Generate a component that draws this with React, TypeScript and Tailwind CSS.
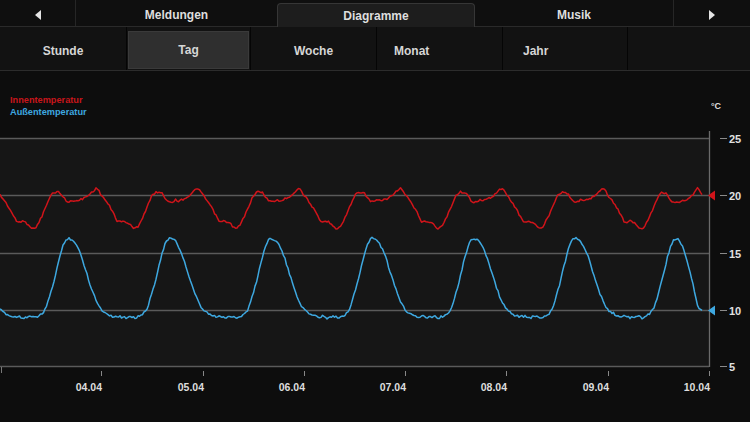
const PERIOD = 101.3;

const RED: [number, number][] = [
  [0, 195], [4, 200], [8, 206], [12, 213], [16, 221], [19, 222], [23, 221], [28, 224],
  [33, 229], [37, 226], [42, 216], [47, 204], [51, 195], [55, 192], [59, 192], [62, 195],
  [66, 201], [70, 202], [74, 200], [78, 201], [82, 199], [86, 197], [90, 194], [94, 190],
  [97, 188], [101.3, 195],
];

const RED_LAST: [number, number][] = [
  [0, 195], [4, 200], [8, 206], [12, 213], [16, 221], [19, 222], [23, 221], [28, 224],
  [33, 229], [37, 226], [42, 216], [47, 204], [51, 195], [55, 192], [59, 194], [62, 200],
  [66, 202], [70, 203], [74, 201], [78, 201], [82, 198], [86, 194], [90, 188], [92, 190],
  [95, 195], [101.3, 195],
];

const BLUE: [number, number][] = [
  [0, 310], [5, 313], [10, 316], [14, 317], [18, 316], [22, 318], [26, 317], [30, 316],
  [34, 318], [38, 316], [42, 314], [45, 310], [48, 302], [51, 292], [54, 281], [57, 268],
  [60, 256], [63, 246], [66, 240], [68, 238], [71, 239], [74, 241], [78, 248], [82, 258],
  [86, 271], [90, 284], [94, 295], [97, 302], [101.3, 310],
];

const BLUE_LAST: [number, number][] = [
  [0, 310], [5, 313], [10, 316], [14, 317], [18, 316], [22, 318], [26, 317], [30, 316],
  [34, 318], [38, 316], [42, 314], [45, 310], [48, 302], [51, 292], [54, 281], [57, 268],
  [60, 256], [63, 246], [66, 240], [68, 238], [71, 240], [74, 245], [78, 256], [82, 272],
  [86, 288], [89, 302], [91, 309], [93, 310], [101.3, 310],
];

function interp(keys: [number, number][], t: number) {
  for (let i = 0; i < keys.length - 1; i++) {
    const [t0, y0] = keys[i];
    const [t1, y1] = keys[i + 1];
    if (t >= t0 && t <= t1) return y0 + ((t - t0) / (t1 - t0)) * (y1 - y0);
  }
  return keys[keys.length - 1][1];
}

function noise(i: number, seed: number) {
  const v = Math.sin(i * 12.9898 + seed * 78.233) * 43758.5453;
  return v - Math.floor(v) - 0.5;
}

function buildPath(keys: [number, number][], last: [number, number][], seed: number, amp: number) {
  const pts: string[] = [];
  let i = 0;
  for (let x = 0; x <= 703; x += 1.5) {
    const t = x % PERIOD;
    const k = x >= PERIOD * 6 ? last : keys;
    const y = interp(k, t) + noise(i, seed) * amp;
    pts.push(`${x.toFixed(1)},${y.toFixed(1)}`);
    i++;
  }
  return "M" + pts.join(" L");
}

const gridY = [
  { y: 138, label: "25" },
  { y: 195, label: "20" },
  { y: 253, label: "15" },
  { y: 310, label: "10" },
  { y: 366, label: "5" },
];

const days = [
  { x: 101, label: "04.04" },
  { x: 203, label: "05.04" },
  { x: 304, label: "06.04" },
  { x: 405, label: "07.04" },
  { x: 506, label: "08.04" },
  { x: 608, label: "09.04" },
  { x: 709, label: "10.04" },
];

const FONT = "Liberation Sans, Arial, sans-serif";

function Chart() {
  const redPath = buildPath(RED, RED_LAST, 1, 2.2);
  const bluePath = buildPath(BLUE, BLUE_LAST, 2, 2.4);
  return (
    <svg width="750" height="351" viewBox="0 71 750 351" className="block">
      <rect x="0" y="71" width="750" height="351" fill="#0d0d0d" />
      <rect x="0" y="138" width="709" height="228" fill="#161616" />
      <text x="10" y="103" fill="#c8151b" fontSize="9.2" fontWeight="700" fontFamily={FONT}>
        Innentemperatur
      </text>
      <text x="10" y="115" fill="#3ea8e0" fontSize="9.2" fontWeight="700" fontFamily={FONT}>
        Außentemperatur
      </text>
      <text x="711" y="109" fill="#dddddd" fontSize="9" fontWeight="700" fontFamily={FONT}>
        °C
      </text>
      {gridY.map((g) => (
        <g key={g.label}>
          <line x1="0" x2="709" y1={g.y + 0.5} y2={g.y + 0.5} stroke="#5a5a5a" strokeWidth="1.3" />
          <line x1="720" x2="727" y1={g.y + 0.5} y2={g.y + 0.5} stroke="#8a8a8a" strokeWidth="1" />
          <text x="729" y={g.y + 4.5} fill="#e0e0e0" fontSize="11" fontWeight="700" fontFamily={FONT}>
            {g.label}
          </text>
        </g>
      ))}
      <line x1="709.5" x2="709.5" y1="131" y2="367" stroke="#6a6a6a" strokeWidth="1.3" />
      <line x1="1.5" x2="1.5" y1="367" y2="373" stroke="#777" strokeWidth="1" />
      {days.map((d) => (
        <g key={d.label}>
          <line x1={d.x + 0.5} x2={d.x + 0.5} y1="371" y2="376" stroke="#888" strokeWidth="1" />
          <text x={d.x + 1} y="391" textAnchor="end" fill="#dddddd" fontSize="10.5" fontWeight="700" fontFamily={FONT}>
            {d.label}
          </text>
        </g>
      ))}
      <path d={bluePath} fill="none" stroke="#3ea8e0" strokeWidth="1.5" strokeLinejoin="round" />
      <path d={redPath} fill="none" stroke="#d0141a" strokeWidth="1.5" strokeLinejoin="round" />
      <polygon points="708,195.5 715,190.5 715,200.5" fill="#d0141a" />
      <polygon points="708,310.5 715,305.5 715,315.5" fill="#3ea8e0" />
    </svg>
  );
}

function Arrow({ dir }: { dir: "left" | "right" }) {
  return (
    <svg width="6" height="10" viewBox="0 0 6 10">
      {dir === "left" ? <polygon points="6,0 6,10 0,5" fill="#e5e5e5" /> : <polygon points="0,0 0,10 6,5" fill="#e5e5e5" />}
    </svg>
  );
}

export default function App() {
  return (
    <div
      className="w-[750px] h-[422px] overflow-hidden bg-[#0d0d0d] flex flex-col"
      style={{ fontFamily: "'Liberation Sans', Arial, sans-serif" }}
    >
      {/* top tabs */}
      <div className="h-[27px] flex bg-[#0f0f0f] border-b border-[#2a2a2a] text-[12px] font-bold text-[#dedede]">
        <div className="w-[76px] pt-[3px] flex items-center justify-center border-r border-[#262626]">
          <Arrow dir="left" />
        </div>
        <div className="w-[201px] pt-[3px] flex items-center justify-center">Meldungen</div>
        <div className="w-[198px] mt-[3px] -mb-px flex items-center justify-center bg-[#1d1d1d] border border-b-0 border-[#363636] rounded-t-[4px]">
          Diagramme
        </div>
        <div className="w-[199px] pt-[3px] flex items-center justify-center border-r border-[#262626]">Musik</div>
        <div className="flex-1 pt-[3px] flex items-center justify-center">
          <Arrow dir="right" />
        </div>
      </div>

      {/* range selector */}
      <div className="h-[44px] flex bg-[#121212] border-b border-[#2c2c2c] text-[12px] font-bold text-[#d6d6d6]">
        <div className="w-[127px] pt-[4px] flex items-center justify-center border-r border-[#050505]">Stunde</div>
        <div className="w-[124px] pt-[4px] pb-[1px] border-r border-[#050505]">
          <div className="h-full mx-[1px] flex items-center justify-center bg-[#2f2f2f] border border-[#3a3a3a]">Tag</div>
        </div>
        <div className="w-[126px] pt-[4px] flex items-center justify-center border-r border-[#050505]">Woche</div>
        <div className="w-[126px] pt-[4px] flex items-center pl-[17px] border-r border-[#050505]">Monat</div>
        <div className="w-[125px] pt-[4px] flex items-center pl-[20px] border-r border-[#050505]">Jahr</div>
        <div className="flex-1" />
      </div>

      <Chart />
    </div>
  );
}
